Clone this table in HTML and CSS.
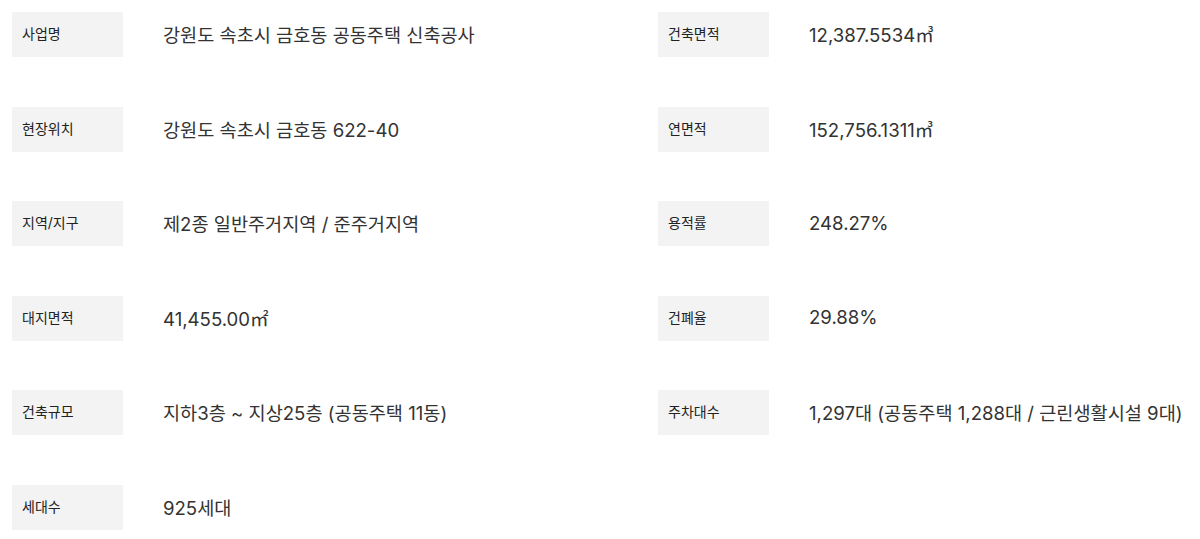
FILE: index.html
```html
<!DOCTYPE html>
<html lang="ko">
<head>
    <meta charset="UTF-8">
    <meta name="viewport" content="width=device-width, initial-scale=1.0">
    <title>사업개요</title>
    <link rel="stylesheet" href="styles.css">
</head>
<body>
    <div class="overview">
        <div class="col">
            <div class="row"><div class="label">사업명</div><div class="value">강원도 속초시 금호동 공동주택 신축공사</div></div>
            <div class="row"><div class="label">현장위치</div><div class="value">강원도 속초시 금호동 622-40</div></div>
            <div class="row"><div class="label">지역/지구</div><div class="value">제2종 일반주거지역 / 준주거지역</div></div>
            <div class="row"><div class="label">대지면적</div><div class="value">41,455.00㎡</div></div>
            <div class="row"><div class="label">건축규모</div><div class="value">지하3층 ~ 지상25층 (공동주택 11동)</div></div>
            <div class="row"><div class="label">세대수</div><div class="value">925세대</div></div>
        </div>
        <div class="col">
            <div class="row"><div class="label">건축면적</div><div class="value">12,387.5534㎥</div></div>
            <div class="row"><div class="label">연면적</div><div class="value">152,756.1311㎥</div></div>
            <div class="row"><div class="label">용적률</div><div class="value">248.27%</div></div>
            <div class="row"><div class="label">건폐율</div><div class="value">29.88%</div></div>
            <div class="row"><div class="label">주차대수</div><div class="value">1,297대 (공동주택 1,288대 / 근린생활시설 9대)</div></div>
        </div>
    </div>
</body>
</html>
```

FILE: styles.css
```css
body {
    margin: 0;
    padding: 0;
    background: #fff;
    color: #333;
    font-family: Inter, 'Noto Sans CJK KR', sans-serif;
}
.overview {
    display: grid;
    grid-template-columns: 646px 1fr;
    padding: 12px;
}
.col {
    display: flex;
    flex-direction: column;
    gap: 49.6px;
}
.row {
    display: flex;
    align-items: center;
    height: 45px;
}
.label {
    box-sizing: border-box;
    width: 111px;
    height: 45px;
    padding: 0 0 3px 10px;
    display: flex;
    align-items: center;
    background: #f3f3f3;
    color: #222;
    font-size: 14px;
    flex-shrink: 0;
}
.value {
    margin-left: 40px;
    padding-bottom: 2px;
    font-size: 18.6px;
    color: #333;
    white-space: nowrap;
}
```
